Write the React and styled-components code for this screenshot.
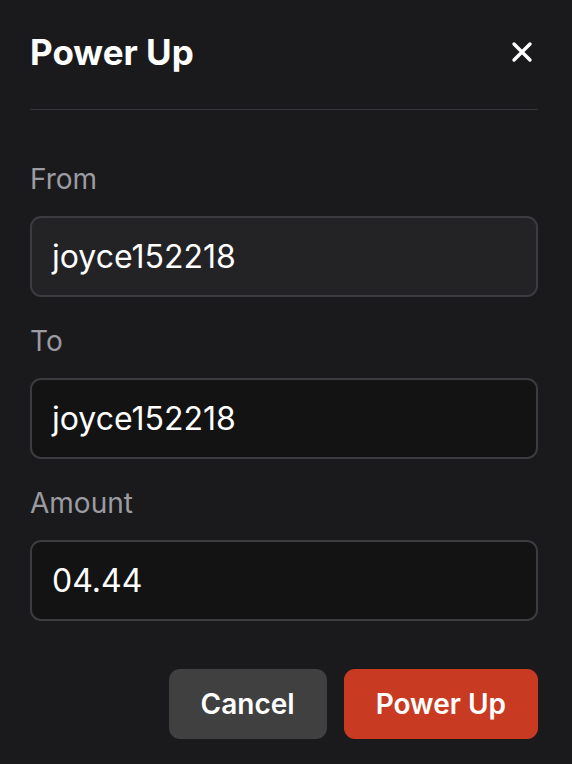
import React from 'react';
import styled, { createGlobalStyle } from 'styled-components';

const GlobalStyle = createGlobalStyle`
  html, body { margin: 0; padding: 0; background: #1a1a1d; }
  body { font-family: Inter, "Liberation Sans", sans-serif; -webkit-font-smoothing: antialiased; }
`;

const Dialog = styled.div`
  width: 572px;
  height: 764px;
  box-sizing: border-box;
  padding: 30px 34px 0 30px;
  background: #1a1a1d;
  color: #fff;
`;

const Header = styled.div`
  display: flex;
  align-items: center;
  justify-content: space-between;
  height: 44px;
  padding-bottom: 35px;
  border-bottom: 1px solid #35353a;
`;

const Title = styled.h1`
  margin: 0;
  font-size: 35px;
  font-weight: 700;
  letter-spacing: 0;
`;

const CloseButton = styled.button`
  display: flex;
  align-items: center;
  justify-content: center;
  width: 32px;
  height: 32px;
  padding: 0;
  border: none;
  background: none;
  color: #fff;
`;

const Form = styled.div`
  display: flex;
  flex-direction: column;
  gap: 28px;
  padding-top: 53px;
`;

const Field = styled.div`
  display: flex;
  flex-direction: column;
`;

const Label = styled.label`
  font-size: 28px;
  line-height: 32px;
  color: #9b9ba1;
  margin-bottom: 21px;
`;

const Input = styled.div`
  box-sizing: border-box;
  height: 81px;
  display: flex;
  align-items: center;
  padding: 0 20px;
  border: 2px solid #3b3b40;
  border-radius: 11px;
  background: ${p => (p.$disabled ? '#232326' : '#131313')};
  font-size: 32px;
  color: #fff;
`;

const Actions = styled.div`
  display: flex;
  justify-content: flex-end;
  gap: 17px;
  margin-top: 48px;
`;

const Button = styled.button`
  height: 70px;
  padding: 0 32px;
  border: none;
  border-radius: 11px;
  background: ${p => (p.$primary ? '#c93a22' : '#404040')};
  color: #fff;
  font-family: Inter, "Liberation Sans", sans-serif;
  font-size: 28px;
  font-weight: 600;
`;

const fields = [
  { label: 'From', value: 'joyce152218', disabled: true },
  { label: 'To', value: 'joyce152218' },
  { label: 'Amount', value: '04.44' },
];

export default function App() {
  return (
    <>
      <GlobalStyle />
      <Dialog>
        <Header>
          <Title>Power Up</Title>
          <CloseButton aria-label="Close">
            <svg width="24" height="24" viewBox="0 0 24 24" fill="none" stroke="#fff" strokeWidth="3.4" strokeLinecap="round">
              <path d="M4 4l16 16M20 4L4 20" />
            </svg>
          </CloseButton>
        </Header>
        <Form>
          {fields.map(f => (
            <Field key={f.label}>
              <Label>{f.label}</Label>
              <Input $disabled={f.disabled}>{f.value}</Input>
            </Field>
          ))}
        </Form>
        <Actions>
          <Button>Cancel</Button>
          <Button $primary>Power Up</Button>
        </Actions>
      </Dialog>
    </>
  );
}
